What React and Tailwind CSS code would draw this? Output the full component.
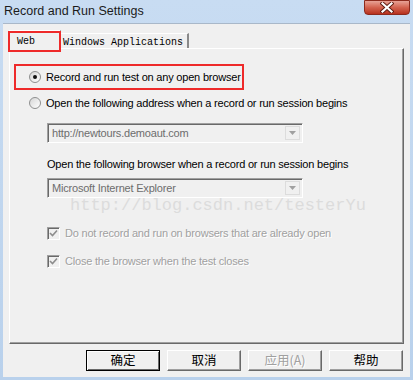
import React from 'react';

const sans = "font-['Liberation_Sans',Arial,sans-serif]";

function Radio({ checked }) {
  return (
    <span className="w-[12px] h-[12px] rounded-full border border-[#8e8f8f] bg-linear-to-br from-[#d6d6d6] to-white flex items-center justify-center shrink-0">
      {checked && <span className="w-[4px] h-[4px] rounded-full bg-[#111]" />}
    </span>
  );
}

function Check() {
  return (
    <span className="w-[13px] h-[13px] border border-[#a0a0a0] border-r-white border-b-white bg-[#f0f0f0] shadow-[inset_1px_1px_0_#696969] flex items-center justify-center shrink-0">
      <svg width="9" height="9" viewBox="0 0 9 9">
        <path d="M1 4 L3.5 6.5 L8 1.5" fill="none" stroke="#8d8d8d" strokeWidth="1.6" />
      </svg>
    </span>
  );
}

function Combo({ text }) {
  return (
    <div className="ml-[37px] w-[256px] h-[20px] border border-[#a0a0a0] border-r-white border-b-white shadow-[inset_1px_1px_0_#696969] bg-[#f0f0f0] flex items-center justify-between pl-[4px] pr-[2px]">
      <span className="text-[11px] text-[#6d6d6d] tracking-[-0.2px]">{text}</span>
      <span className="w-[15px] h-[14px] border border-[#dcdcdc] bg-[#f0f0f0] flex items-center justify-center">
        <svg width="7" height="4" viewBox="0 0 7 4">
          <path d="M0 0 H7 L3.5 4 Z" fill="#a0a0a0" />
        </svg>
      </span>
    </div>
  );
}

function Button({ children, primary, disabled }) {
  const frame = primary
    ? 'border border-black shadow-[inset_1px_1px_0_#fff,inset_-1px_-1px_0_#696969]'
    : 'border border-white border-r-[#696969] border-b-[#696969] shadow-[inset_-1px_-1px_0_#a0a0a0]';
  return (
    <div
      className={`w-[74px] h-[21px] bg-[#f0f0f0] flex items-center justify-center text-[12.5px] font-['Noto_Sans_CJK_SC',sans-serif] ${frame} ${
        disabled ? 'text-[#a0a0a0] [text-shadow:1px_1px_0_#fff]' : 'text-black'
      }`}
    >
      {children}
    </div>
  );
}

export default function App() {
  return (
    <div className={`w-[413px] h-[380px] bg-linear-to-b from-[#c8dcf2] to-[#b9d1ec] flex flex-col overflow-hidden ${sans}`}>
      {/* title bar */}
      <div className="h-[23px] flex items-start justify-between shrink-0">
        <span className="pl-[4px] pt-[2px] text-[12.5px] text-[#1b1b1b]">Record and Run Settings</span>
        <div className="mr-[3px] w-[46px] h-[15px] rounded-b-[4px] border border-[#8c2a1d] bg-linear-to-b from-[#e7a296] via-[#d3624f] to-[#b7301c] flex items-center justify-center">
          <svg width="14" height="11" viewBox="0 0 14 11">
            <path d="M2.5 1.5 L11.5 9.5 M11.5 1.5 L2.5 9.5" stroke="#5a1a10" strokeWidth="4" strokeLinecap="square" />
            <path d="M2.5 1.5 L11.5 9.5 M11.5 1.5 L2.5 9.5" stroke="#fff" strokeWidth="2.2" strokeLinecap="square" />
          </svg>
        </div>
      </div>

      {/* client area */}
      <div className="relative mx-[3px] mb-[3px] flex-1 bg-[#f0f0f0] border-t border-[#a9b8c9] px-[6px] pt-[7px]">
        {/* tabs */}
        <div className="relative h-[17px] flex items-end font-['Liberation_Mono',monospace] text-[10px] text-black">
          <div className="relative z-10 w-[52px] h-[19px] -mb-[1px] bg-[#f0f0f0] border-l border-t border-white border-r border-r-[#696969] pl-[7px] pt-[3px]">
            Web
          </div>
          <div className="h-[15px] border-t border-white border-r-2 border-r-[#8a8a8a] pl-[2px] pr-[4px] pt-[1px]">
            Windows Applications
          </div>
          <div className="absolute left-[-1px] top-[0px] w-[53px] h-[21px] border-2 border-[#ee2a2a] z-20" />
        </div>

        {/* panel */}
        <div className="h-[296px] border border-white border-r-[#696969] border-b-[#696969] shadow-[inset_-1px_-1px_0_#a0a0a0] flex flex-col text-[11px] tracking-[-0.2px] text-black">
          <div className="ml-[4px] mt-[15px] w-[230px] h-[26px] border-2 border-[#ee2a2a] flex items-center pl-[13px] gap-[5px]">
            <Radio checked />
            <span>Record and run test on any open browser</span>
          </div>
          <div className="mt-[6px] h-[14px] pl-[19px] flex items-center gap-[5px]">
            <Radio />
            <span>Open the following address when a record or run session begins</span>
          </div>
          <div className="mt-[13px]">
            <Combo text="http://newtours.demoaut.com" />
          </div>
          <div className="mt-[14px] h-[14px] ml-[37px] flex items-center">
            Open the following browser when a record or run session begins
          </div>
          <div className="mt-[7px]">
            <Combo text="Microsoft Internet Explorer" />
          </div>
          <div className="mt-[27px] h-[16px] ml-[37px] flex items-center gap-[5px] text-[#a0a0a0] [text-shadow:1px_1px_0_#fff]">
            <Check />
            <span>Do not record and run on browsers that are already open</span>
          </div>
          <div className="mt-[12px] h-[16px] ml-[37px] flex items-center gap-[5px] text-[#a0a0a0] [text-shadow:1px_1px_0_#fff]">
            <Check />
            <span>Close the browser when the test closes</span>
          </div>
        </div>

        {/* buttons */}
        <div className="mt-[6px] flex justify-end gap-[7px] pr-[1px]">
          <Button primary>确定</Button>
          <Button>取消</Button>
          <Button disabled>应用(A)</Button>
          <Button>帮助</Button>
        </div>

        {/* watermark */}
        <span className="absolute left-[67px] top-[173px] font-['Liberation_Mono',monospace] text-[17px] leading-[17px] text-[#dcdcdc] pointer-events-none">
          http://blog.csdn.net/testerYu
        </span>
      </div>
    </div>
  );
}
